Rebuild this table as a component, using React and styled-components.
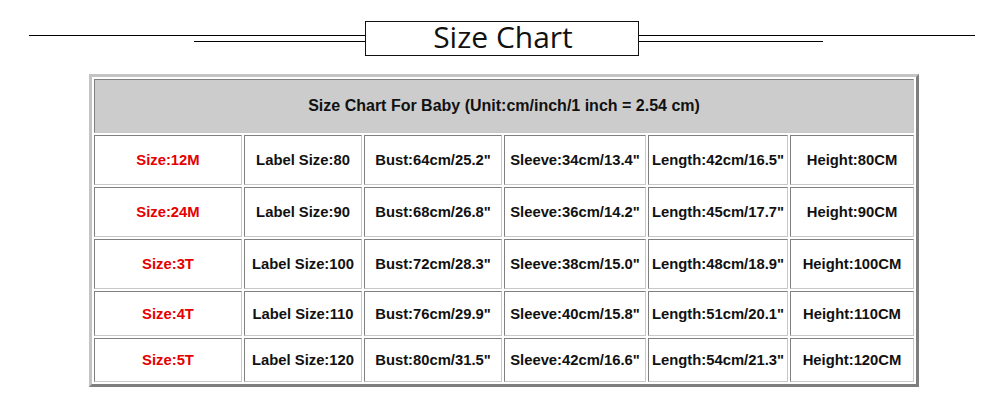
import React from 'react';
import styled, { createGlobalStyle } from 'styled-components';

const rows = [
  ['Size:12M', 'Label Size:80', 'Bust:64cm/25.2"', 'Sleeve:34cm/13.4"', 'Length:42cm/16.5"', 'Height:80CM'],
  ['Size:24M', 'Label Size:90', 'Bust:68cm/26.8"', 'Sleeve:36cm/14.2"', 'Length:45cm/17.7"', 'Height:90CM'],
  ['Size:3T', 'Label Size:100', 'Bust:72cm/28.3"', 'Sleeve:38cm/15.0"', 'Length:48cm/18.9"', 'Height:100CM'],
  ['Size:4T', 'Label Size:110', 'Bust:76cm/29.9"', 'Sleeve:40cm/15.8"', 'Length:51cm/20.1"', 'Height:110CM'],
  ['Size:5T', 'Label Size:120', 'Bust:80cm/31.5"', 'Sleeve:42cm/16.6"', 'Length:54cm/21.3"', 'Height:120CM'],
];

const rowHeights = [50, 50, 50, 45, 44];
const colWidths = [148, 118, 138, 142, 140, 124];

const GlobalStyle = createGlobalStyle`
  body {
    margin: 0;
    background: #fff;
  }
`;

const Page = styled.div`
  width: 1000px;
  height: 410px;
  padding-top: 21px;
  box-sizing: border-box;
`;

const TitleBar = styled.div`
  display: flex;
  align-items: center;
  height: 34px;
  padding-left: 29px;
  width: 946px;
`;

const Lines = styled.div`
  flex: 1;
  display: flex;
  flex-direction: column;
  align-items: ${p => (p.$side === 'left' ? 'flex-end' : 'flex-start')};
  gap: 5px;
`;

const Line = styled.div`
  height: 1px;
  background: #000;
  width: ${p => p.$w};
`;

const TitleBox = styled.div`
  width: 274px;
  height: 35px;
  box-sizing: border-box;
  border: 1.5px solid #111;
  display: flex;
  align-items: center;
  justify-content: center;
  font-family: 'Open Sans', 'Noto Sans', sans-serif;
  font-size: 30px;
  color: #111;
  line-height: 1;
  padding-bottom: 2px;
  padding-left: 2px;
`;

const Chart = styled.table`
  margin: 19px 0 0 89px;
  width: 830px;
  table-layout: fixed;
  border-collapse: separate;
  border-spacing: 2px;
  border-width: 3px;
  border-style: solid;
  border-color: #c4c4c4 #7e7e7e #7e7e7e #c4c4c4;
  font-family: 'Liberation Sans', Arial, sans-serif;
  font-weight: bold;
  font-size: 14.8px;
`;

const Cell = styled.td`
  box-sizing: border-box;
  padding: 0;
  height: ${p => p.$h}px;
  text-align: center;
  vertical-align: middle;
  border-width: 1px;
  border-style: solid;
  border-color: #808080 #c8c8c8 #c8c8c8 #808080;
  background: ${p => (p.$head ? '#cccccc' : '#fff')};
  font-size: ${p => (p.$head ? '16px' : 'inherit')};
  color: ${p => (p.$red ? '#e60000' : '#111')};
  white-space: nowrap;
`;

export default function App() {
  return (
    <Page>
      <GlobalStyle />
      <TitleBar>
        <Lines $side="left">
          <Line $w="100%" />
          <Line $w="171px" />
        </Lines>
        <TitleBox>Size Chart</TitleBox>
        <Lines $side="right">
          <Line $w="100%" />
          <Line $w="184px" />
        </Lines>
      </TitleBar>
      <Chart>
        <colgroup>
          {colWidths.map((w, i) => (
            <col key={i} style={{ width: w }} />
          ))}
        </colgroup>
        <tbody>
          <tr>
            <Cell colSpan={6} $head $h={54}>
              Size Chart For Baby (Unit:cm/inch/1 inch = 2.54 cm)
            </Cell>
          </tr>
          {rows.map((r, i) => (
            <tr key={i}>
              {r.map((c, j) => (
                <Cell key={j} $h={rowHeights[i]} $red={j === 0}>
                  {c}
                </Cell>
              ))}
            </tr>
          ))}
        </tbody>
      </Chart>
    </Page>
  );
}
